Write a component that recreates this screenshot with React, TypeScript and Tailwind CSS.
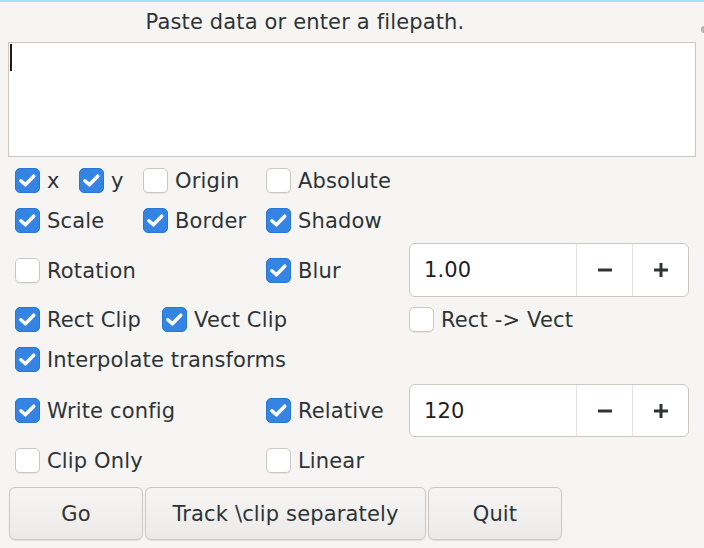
import React from "react";

const font = { fontFamily: '"DejaVu Sans", Verdana, sans-serif', letterSpacing: "0.15px" };

function Check({ checked, label, w }: { checked: boolean; label: string; w?: number }) {
  return (
    <div className="flex items-center shrink-0" style={w ? { width: w } : undefined}>
      {checked ? (
        <div className="w-[25px] h-[25px] rounded-[5px] bg-[#3584e4] border border-[#2a76d4] flex items-center justify-center">
          <svg width="25" height="25" viewBox="0 0 25 25">
            <path d="M5.3 12.8 L10.2 17.2 L19.3 7.8" fill="none" stroke="#ffffff" strokeWidth="3.8" strokeLinecap="round" strokeLinejoin="round" />
          </svg>
        </div>
      ) : (
        <div className="w-[25px] h-[25px] rounded-[5px] bg-white border border-[#cdc7c2] shadow-[0_1px_0_rgba(0,0,0,0.06)]" />
      )}
      <span className="ml-[7px] pt-[2px] text-[21px] leading-none text-[#2e3436] whitespace-nowrap">{label}</span>
    </div>
  );
}

function Spin({ value }: { value: string }) {
  return (
    <div className="flex w-[280px] h-full rounded-[6px] border border-[#cdc7c2] bg-white overflow-hidden">
      <div className="flex-1 flex items-center pl-[14px] pt-[2px] text-[21px] text-[#1e1e1e]">{value}</div>
      <div className="w-[56px] flex items-center justify-center border-l border-[#e4e1de]">
        <svg width="18" height="18" viewBox="0 0 18 18">
          <rect x="2" y="7.5" width="14" height="3" fill="#2e3436" />
        </svg>
      </div>
      <div className="w-[56px] flex items-center justify-center border-l border-[#e4e1de]">
        <svg width="18" height="18" viewBox="0 0 18 18">
          <rect x="2" y="7.5" width="14" height="3" fill="#2e3436" />
          <rect x="7.5" y="2" width="3" height="14" fill="#2e3436" />
        </svg>
      </div>
    </div>
  );
}

function Btn({ label, w }: { label: string; w: number }) {
  return (
    <div
      className="h-full flex items-center justify-center pt-[2px] rounded-[6px] border border-[#cdc7c2] bg-gradient-to-b from-[#f6f5f4] to-[#ecebe9] shadow-[0_1px_1px_rgba(0,0,0,0.08)] text-[21px] text-[#2e3436]"
      style={{ width: w }}
    >
      {label}
    </div>
  );
}

export default function App() {
  return (
    <div className="relative w-[704px] h-[548px] overflow-hidden bg-[#f6f5f4] border-t-2 border-[#a3e2f6]" style={font}>
      <div className="absolute right-0 top-[24px] w-[3px] h-[7px] rounded-l bg-[#b9b7b5]" />
      <div className="w-[610px] h-[40px] pt-[2px] flex items-center justify-center text-[21px] text-[#2e3436]">
        Paste data or enter a filepath.
      </div>
      <div className="ml-[8px] w-[688px] h-[115px] bg-white border border-[#cdc7c2] relative">
        <div className="absolute left-[1px] top-[1px] w-[2px] h-[27px] bg-[#1c1c1c]" />
      </div>

      <div className="pl-[15px]">
        <div className="mt-[3px] h-[40px] flex items-center">
          <Check checked label="x" w={64} />
          <Check checked label="y" w={64} />
          <Check checked={false} label="Origin" w={123} />
          <Check checked={false} label="Absolute" />
        </div>
        <div className="h-[40px] flex items-center">
          <Check checked label="Scale" w={128} />
          <Check checked label="Border" w={123} />
          <Check checked label="Shadow" />
        </div>
        <div className="mt-[3px] h-[54px] flex items-center">
          <Check checked={false} label="Rotation" w={251} />
          <Check checked label="Blur" w={143} />
          <Spin value="1.00" />
        </div>
        <div className="h-[45px] flex items-center">
          <Check checked label="Rect Clip" w={147} />
          <Check checked label="Vect Clip" w={247} />
          <Check checked={false} label="Rect -> Vect" />
        </div>
        <div className="h-[35px] flex items-center">
          <Check checked label="Interpolate transforms" />
        </div>
        <div className="mt-[7px] h-[53px] flex items-center">
          <Check checked label="Write config" w={251} />
          <Check checked label="Relative" w={143} />
          <Spin value="120" />
        </div>
        <div className="h-[47px] flex items-center">
          <Check checked={false} label="Clip Only" w={251} />
          <Check checked={false} label="Linear" />
        </div>
      </div>

      <div className="mt-[3px] ml-[9px] h-[53px] flex gap-[2px]">
        <Btn label="Go" w={134} />
        <Btn label="Track \clip separately" w={281} />
        <Btn label="Quit" w={134} />
      </div>
    </div>
  );
}
